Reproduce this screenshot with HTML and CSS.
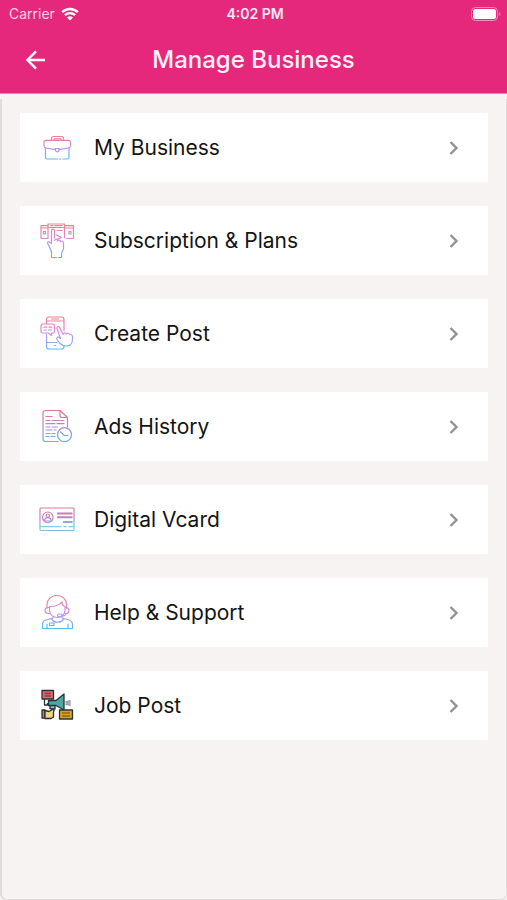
FILE: index.html
```html
<!DOCTYPE html>
<html lang="en">
<head>
<meta charset="utf-8">
<meta name="viewport" content="width=device-width, initial-scale=1">
<title>Manage Business</title>
<link rel="stylesheet" href="styles.css">
</head>
<body>
<svg class="defs" width="0" height="0" aria-hidden="true">
  <defs>
    <linearGradient id="tint" gradientUnits="userSpaceOnUse" x1="0" y1="3" x2="0" y2="33">
      <stop offset="0" stop-color="#f0697f"/>
      <stop offset="0.5" stop-color="#c77bea"/>
      <stop offset="1" stop-color="#36b4ee"/>
    </linearGradient>
    <linearGradient id="tint-short" gradientUnits="userSpaceOnUse" x1="0" y1="8" x2="0" y2="28">
      <stop offset="0" stop-color="#f0697f"/>
      <stop offset="0.5" stop-color="#b77bea"/>
      <stop offset="1" stop-color="#36b4ee"/>
    </linearGradient>
    <linearGradient id="tint-deep" gradientUnits="userSpaceOnUse" x1="0" y1="3" x2="0" y2="31">
      <stop offset="0" stop-color="#e2607c"/>
      <stop offset="0.5" stop-color="#a673c4"/>
      <stop offset="1" stop-color="#47a8dc"/>
    </linearGradient>
    <linearGradient id="tint-card" gradientUnits="userSpaceOnUse" x1="0" y1="6" x2="0" y2="28">
      <stop offset="0" stop-color="#e2607c"/>
      <stop offset="0.5" stop-color="#a673c4"/>
      <stop offset="0.85" stop-color="#6fc4e4"/>
      <stop offset="1" stop-color="#6fb4dc"/>
    </linearGradient>
  </defs>
</svg>
<header class="top">
  <div class="status">
    <div class="status-left">
      <span class="carrier">Carrier</span>
      <svg class="wifi" viewBox="0 0 18 14" aria-hidden="true"><path d="M1.2 5.2a11.2 11.2 0 0 1 15.6 0M4 8.1a7.2 7.2 0 0 1 10 0" fill="none" stroke="#fff" stroke-width="2.4"/><path d="M6 10.6a4.3 4.3 0 0 1 6 0L9 13.6z" fill="#fff"/></svg>
    </div>
    <span class="time">4:02 PM</span>
    <div class="status-right">
      <svg class="battery" viewBox="0 0 30 14" aria-hidden="true"><rect x="0.5" y="0.5" width="26" height="13" rx="4" fill="none" stroke="#f48dbb"/><rect x="2" y="2" width="23" height="10" rx="2.500" fill="#fff"/><path d="M28 5v4c1.800-.8 1.800-3.200 0-4z" fill="#f48dbb"/></svg>
    </div>
  </div>
  <div class="bar">
    <button class="back" type="button" aria-label="Back"><svg viewBox="0 0 20 20" aria-hidden="true"><path d="M19 10H1.500M10 1.300L1.400 10l8.600 8.700" fill="none" stroke="#fff" stroke-width="2.400"/></svg></button>
    <h1 class="title">Manage Business</h1>
  </div>
</header>
<main class="content">
  <nav class="menu" aria-label="Manage business">
    <a class="card" href="#business">
      <svg class="icon" viewBox="0 0 36 36" aria-hidden="true"><g class="line short"><path d="M12.500 10V8.500a2 2 0 0 1 2-2h8a2 2 0 0 1 2 2V10M15 10V8.800h7V10"/><path d="M16.500 19.600L7 18a2.500 2.500 0 0 1-2-2v-3.700a2 2 0 0 1 2-2h22.500a2 2 0 0 1 2 2V16a2.500 2.500 0 0 1-2 2L20 19.600"/><path d="M16.500 18.500h3.600v1.500a1.800 1.800 0 0 1-3.600 0zM6.500 18v9.500a1.500 1.500 0 0 0 1.500 1.500h10.500M20.300 29h1.500M24 29h4.500a1.500 1.500 0 0 0 1.500-1.500V18"/></g></svg>
      <span class="label">My Business</span>
      <svg class="chevron" viewBox="0 0 10 16" aria-hidden="true"><path d="M1.500 2L7.500 8l-6 6"/></svg>
    </a>
    <a class="card" href="#plans">
      <svg class="icon" viewBox="0 0 36 36" aria-hidden="true"><g class="line"><path d="M9 15V1h16.500v14M9 4.500h16.500M9 2.700H2V15.500h7M2 5h7M25.500 2.700H34.500V15.500h-7M25.500 5h9M4.500 8.500h2v2.500H4.500zM30 8.500h2v2.500h-2zM12 2.700h2M16 2.700h7"/><path d="M12.500 18.500V7.700a1.500 1.500 0 0 1 3 0V15M18 7.500h5M17.500 12l5 2.500-5 2M12.500 18.500v2l-2-1.500c-1.500-1-2.500.5-1.500 2l3.500 7.500v6M15.500 17.500c1-2 3-1.500 3 .5 1-1.500 3-1 3 .7 1-1.200 3-.5 3 1.300v6l-2 4v4.500M12.500 34.500h5M19.500 34.500h3"/></g></svg>
      <span class="label">Subscription &amp; Plans</span>
      <svg class="chevron" viewBox="0 0 10 16" aria-hidden="true"><path d="M1.500 2L7.500 8l-6 6"/></svg>
    </a>
    <a class="card" href="#create">
      <svg class="icon" viewBox="0 0 36 36" aria-hidden="true"><g class="line"><path d="M7.500 7.500V3.500a2.500 2.500 0 0 1 2.500-2.500h12.500a2.500 2.500 0 0 1 2.500 2.500V15M7.500 5h17.500M12.500 3h7M7.500 18v12.500a2.500 2.500 0 0 0 2.500 2.500h12.500a2.500 2.500 0 0 0 2.500-2.500V29.500M7.500 26.500H18M15.300 29.500h1.500"/><path d="M3.500 8h10.500a1.500 1.500 0 0 1 1.500 1.500v6a1.500 1.500 0 0 1-1.500 1.500h-1.500v2.500L9.500 17h-6A1.500 1.500 0 0 1 2 15.500v-6A1.500 1.500 0 0 1 3.500 8zM5 11.200h3M10 11.200h2.500M5 14h2.500M9.500 14h3"/><path d="M21.500 22.500L18 12.500c-.5-1.800 1.800-2.600 2.600-1L24 18.500c.3-2 2.700-2.300 3.500-.5.500-1.200 2.500-1 3 .7 1.500-.6 2.800.3 3 1.800v3c0 4-2.500 6.500-6 6.500-3 0-5-1-7-3l-2.500-3.500c-1-1.500.5-3 2-2.200z"/></g></svg>
      <span class="label">Create Post</span>
      <svg class="chevron" viewBox="0 0 10 16" aria-hidden="true"><path d="M1.500 2L7.500 8l-6 6"/></svg>
    </a>
    <a class="card" href="#ads">
      <svg class="icon" viewBox="0 0 36 36" aria-hidden="true"><g class="line deep"><path d="M19 32.500H6.500A2.500 2.500 0 0 1 4 30V4a2.500 2.500 0 0 1 2.500-2.500H21l7.500 7V18M21 1.500v5a2 2 0 0 0 2 2h5.500"/><path d="M7 7.500h6M7 11.500h4M13 11.500h12M7 14.700h9M18 14.700h7M7 18h4M13 18h5.500M7 21h6M15 21h2M7 24.500h4M13 24.500h3M7 27.500h3M12 27.500h4"/><circle cx="25.500" cy="25.700" r="7"/><path d="M21.500 23l4 3.500h3.500"/></g></svg>
      <span class="label">Ads History</span>
      <svg class="chevron" viewBox="0 0 10 16" aria-hidden="true"><path d="M1.500 2L7.500 8l-6 6"/></svg>
    </a>
    <a class="card" href="#vcard">
      <svg class="icon" viewBox="0 0 36 36" aria-hidden="true"><g class="line vcard"><rect x="1" y="6" width="34" height="22.500" rx="1"/><path d="M1 24.700h21M25 24.700h2M30 24.700h5"/><circle cx="8.800" cy="15.300" r="5.300"/><circle cx="8.800" cy="13.700" r="1.700"/><path d="M5.500 19c0-4.500 6.600-4.500 6.600 0z"/><path d="M18.500 11h14.500v.8H18.500zM18.500 14.800h14.500v.8H18.500zM24.500 19.700h8.500v.8h-8.500z"/></g></svg>
      <span class="label">Digital Vcard</span>
      <svg class="chevron" viewBox="0 0 10 16" aria-hidden="true"><path d="M1.500 2L7.500 8l-6 6"/></svg>
    </a>
    <a class="card" href="#help">
      <svg class="icon" viewBox="0 0 36 36" aria-hidden="true"><g class="line"><path d="M8 13.500V9.500a9.800 9 0 0 1 19.600 0v4M10.500 15v-3.500c5 0 10-1 12.500-4.500 0 2.500 1 4 3 4.500V15M10.500 12.500H9a2 2 0 0 0 0 6h2M26 12.500h1a2 2 0 0 1 0 6h-2M10.500 15c0 10 15.500 10 15.500 0M27 18.500c0 2-2 2.500-4.500 2.500"/><rect x="18.500" y="19" width="4.500" height="2.500" rx="1"/><path d="M14 21.500V23l-7 2a5 5 0 0 0-3.500 4.500v4h30v-4A5 5 0 0 0 30 25l-7-2v-1.500M12.500 23.500c1.500 5 10.500 5 12 0M8 33.500v-4.500M29 33.500v-4.500"/><rect x="10.500" y="28" width="4.500" height="2.500"/></g></svg>
      <span class="label">Help &amp; Support</span>
      <svg class="chevron" viewBox="0 0 10 16" aria-hidden="true"><path d="M1.500 2L7.500 8l-6 6"/></svg>
    </a>
    <a class="card" href="#jobs">
      <svg class="icon" viewBox="0 0 36 36" aria-hidden="true"><g stroke="#27333a" stroke-width="1.300" stroke-linejoin="round"><path d="M5.500 11v6h3v-2M24 20v4" fill="none"/><path d="M3 2.500h11.500v8.500H3z" fill="#e06c70"/><path d="M5.500 5.500h6.500M5.500 8h6.500" fill="none" stroke="#8e3d43"/><path d="M11 17v3.500l2 .5h3v-4z" fill="#6fc3ca"/><path d="M9.500 12.500h7.500L25 6v16l-8-4.500H9.500z" fill="#51a79e"/><path d="M26.500 13.500h2v3h-2M28.500 13.500l2.500-1v5l-2.500-1" fill="#b8bdc5" stroke="#9a9ea8"/><path d="M3 22h3v8H3z" fill="#b78845"/><path d="M6 22.500l4 1 3.500-2c1.500 0 2 1 1 2.500v5l-2.500 1.500H6z" fill="#f5d486"/><path d="M20.500 22h13v9H20.500z" fill="#daa11e"/><path d="M23 25h8M23 28h8" fill="none" stroke="#8a6a1c"/></g></svg>
      <span class="label">Job Post</span>
      <svg class="chevron" viewBox="0 0 10 16" aria-hidden="true"><path d="M1.500 2L7.500 8l-6 6"/></svg>
    </a>
  </nav>
</main>
</body>
</html>
```
FILE: styles.css
```css
* { box-sizing: border-box; }

body {
  margin: 0;
  min-height: 100vh;
  display: flex;
  flex-direction: column;
  background: #f7f3f2;
  color: #141414;
  font-family: Inter, "Liberation Sans", sans-serif;
}

.defs { position: absolute; }

.top {
  background: #e6287c;
  color: #fff;
  border-bottom: 1px solid #e985b2;
}

.status {
  display: grid;
  grid-template-columns: 1fr auto 1fr;
  align-items: center;
  height: 27px;
  padding: 0 6px 0 9px;
  font-size: 14px;
  line-height: 20px;
}

.status-left {
  display: flex;
  align-items: center;
  gap: 6px;
}

.carrier { color: #fbd3e5; }
.wifi { width: 18px; height: 14px; }
.time { font-weight: 600; color: #fdeaf3; }

.status-right {
  display: flex;
  justify-content: flex-end;
}

.battery { width: 30px; height: 14px; }

.bar {
  display: grid;
  grid-template-columns: 48px 1fr 48px;
  align-items: center;
  height: 66px;
  padding: 0 12px;
}

.back {
  display: grid;
  place-items: center;
  width: 48px;
  height: 48px;
  padding: 0;
  border: 0;
  background: none;
  cursor: pointer;
}

.back svg { width: 20px; height: 20px; }

.title {
  margin: 0;
  text-align: center;
  font-size: 24px;
  line-height: 32px;
  font-weight: 500;
  color: #fff0f7;
}

.content {
  flex: 1;
  margin-top: 5px;
  padding: 14px 18px;
  border: 1px solid #dfdcdb;
  border-width: 0 1px 1px 2px;
  border-radius: 0 0 6px 6px;
}

.menu {
  display: flex;
  flex-direction: column;
  gap: 24px;
}

.card {
  display: flex;
  align-items: center;
  height: 69px;
  padding: 0 29px 0 19px;
  background: #fff;
  color: inherit;
  text-decoration: none;
}

.icon {
  width: 36px;
  height: 36px;
  margin-right: 19px;
}

.line {
  fill: none;
  stroke: url(#tint);
  stroke-width: 1.2;
  stroke-linecap: round;
  stroke-linejoin: round;
  opacity: 0.85;
}

.short { stroke: url(#tint-short); }
.deep { stroke: url(#tint-deep); }
.vcard { stroke: url(#tint-card); }

.label {
  flex: 1;
  font-size: 21px;
  line-height: 28px;
}

.chevron {
  width: 10px;
  height: 16px;
  fill: none;
  stroke: #929292;
  stroke-width: 2.4;
}
```
